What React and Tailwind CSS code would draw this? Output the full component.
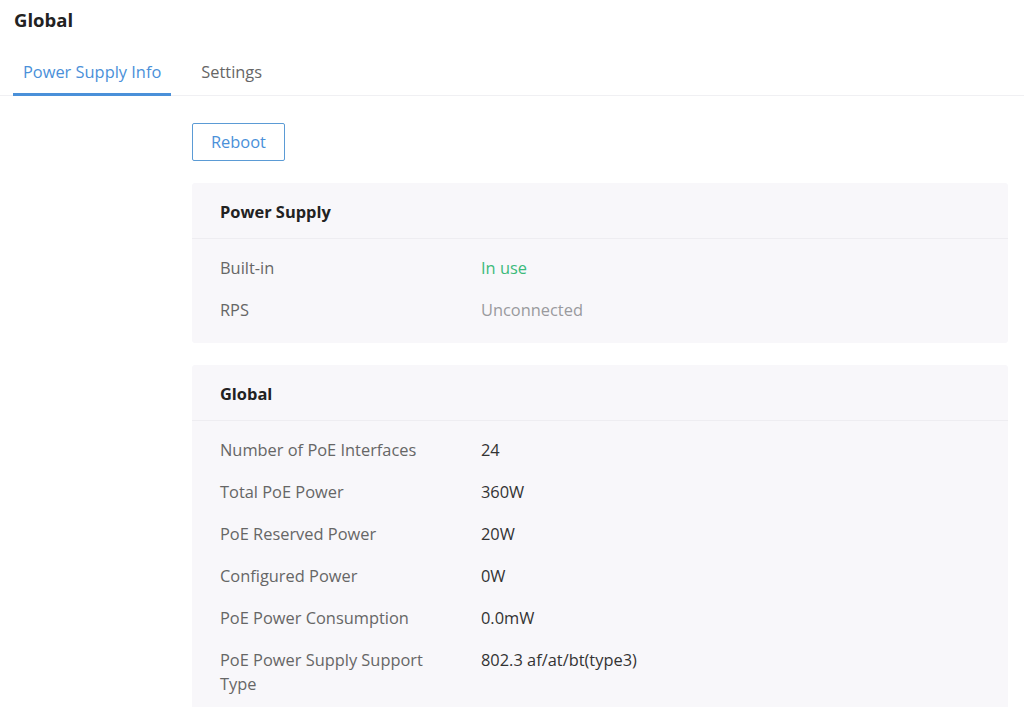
import { useState } from 'react';

const powerSupply = [
  { label: 'Built-in', value: 'In use', tone: 'text-[#3cba7a]' },
  { label: 'RPS', value: 'Unconnected', tone: 'text-[#9a9a9e]' },
];

const globalInfo = [
  { label: 'Number of PoE Interfaces', value: '24' },
  { label: 'Total PoE Power', value: '360W' },
  { label: 'PoE Reserved Power', value: '20W' },
  { label: 'Configured Power', value: '0W' },
  { label: 'PoE Power Consumption', value: '0.0mW' },
  { label: 'PoE Power Supply Support Type', value: '802.3 af/at/bt(type3)' },
];

const InfoCard = ({ title, rows }) => (
  <div className="bg-[#f8f7fa] rounded-[3px]">
    <div className="h-[56px] px-7 pt-1 flex items-center border-b border-[#eeedf1] text-[16.4px] font-bold text-[#222]">
      {title}
    </div>
    <div className="pt-[8px] pb-[12px]">
      {rows.map(row => (
        <div key={row.label} className="flex px-7 py-[9px] text-[16.4px] leading-[24px]">
          <div className="w-[261px] shrink-0 text-[#666] pr-[40px]">{row.label}</div>
          <div className={row.tone || 'text-[#333]'}>{row.value}</div>
        </div>
      ))}
    </div>
  </div>
);

const App = () => {
  const [tab, setTab] = useState('info');

  return (
    <div className="min-h-[707px] bg-white font-['Open_Sans','Noto_Sans',sans-serif]">
      <h1 className="px-[14px] pt-[8px] text-[18.5px] leading-[24px] font-bold text-[#222]">Global</h1>

      {/* Tabs */}
      <div className="mt-[28px] flex gap-5 pl-[13px] border-b border-[#f0f0f3]">
        <button
          onClick={() => setTab('info')}
          className={`px-[10px] pb-[9px] text-[16.4px] leading-[24px] border-b-[3px] -mb-px ${tab === 'info' ? 'text-[#4a90d9] border-[#4a90d9]' : 'text-[#666] border-transparent'}`}
        >
          Power Supply Info
        </button>
        <button
          onClick={() => setTab('settings')}
          className={`px-[10px] pb-[9px] text-[16.4px] leading-[24px] border-b-[3px] -mb-px ${tab === 'settings' ? 'text-[#4a90d9] border-[#4a90d9]' : 'text-[#666] border-transparent'}`}
        >
          Settings
        </button>
      </div>

      <div className="ml-[192px] mr-[16px] pt-[27px]">
        <button className="h-[38px] px-[18px] border border-[#5b9bd5] rounded-[2px] text-[16.4px] text-[#4a90d9] bg-white">
          Reboot
        </button>

        <div className="mt-[22px] flex flex-col gap-[22px]">
          <InfoCard title="Power Supply" rows={powerSupply} />
          <InfoCard title="Global" rows={globalInfo} />
        </div>
      </div>
    </div>
  );
};

export default App;
